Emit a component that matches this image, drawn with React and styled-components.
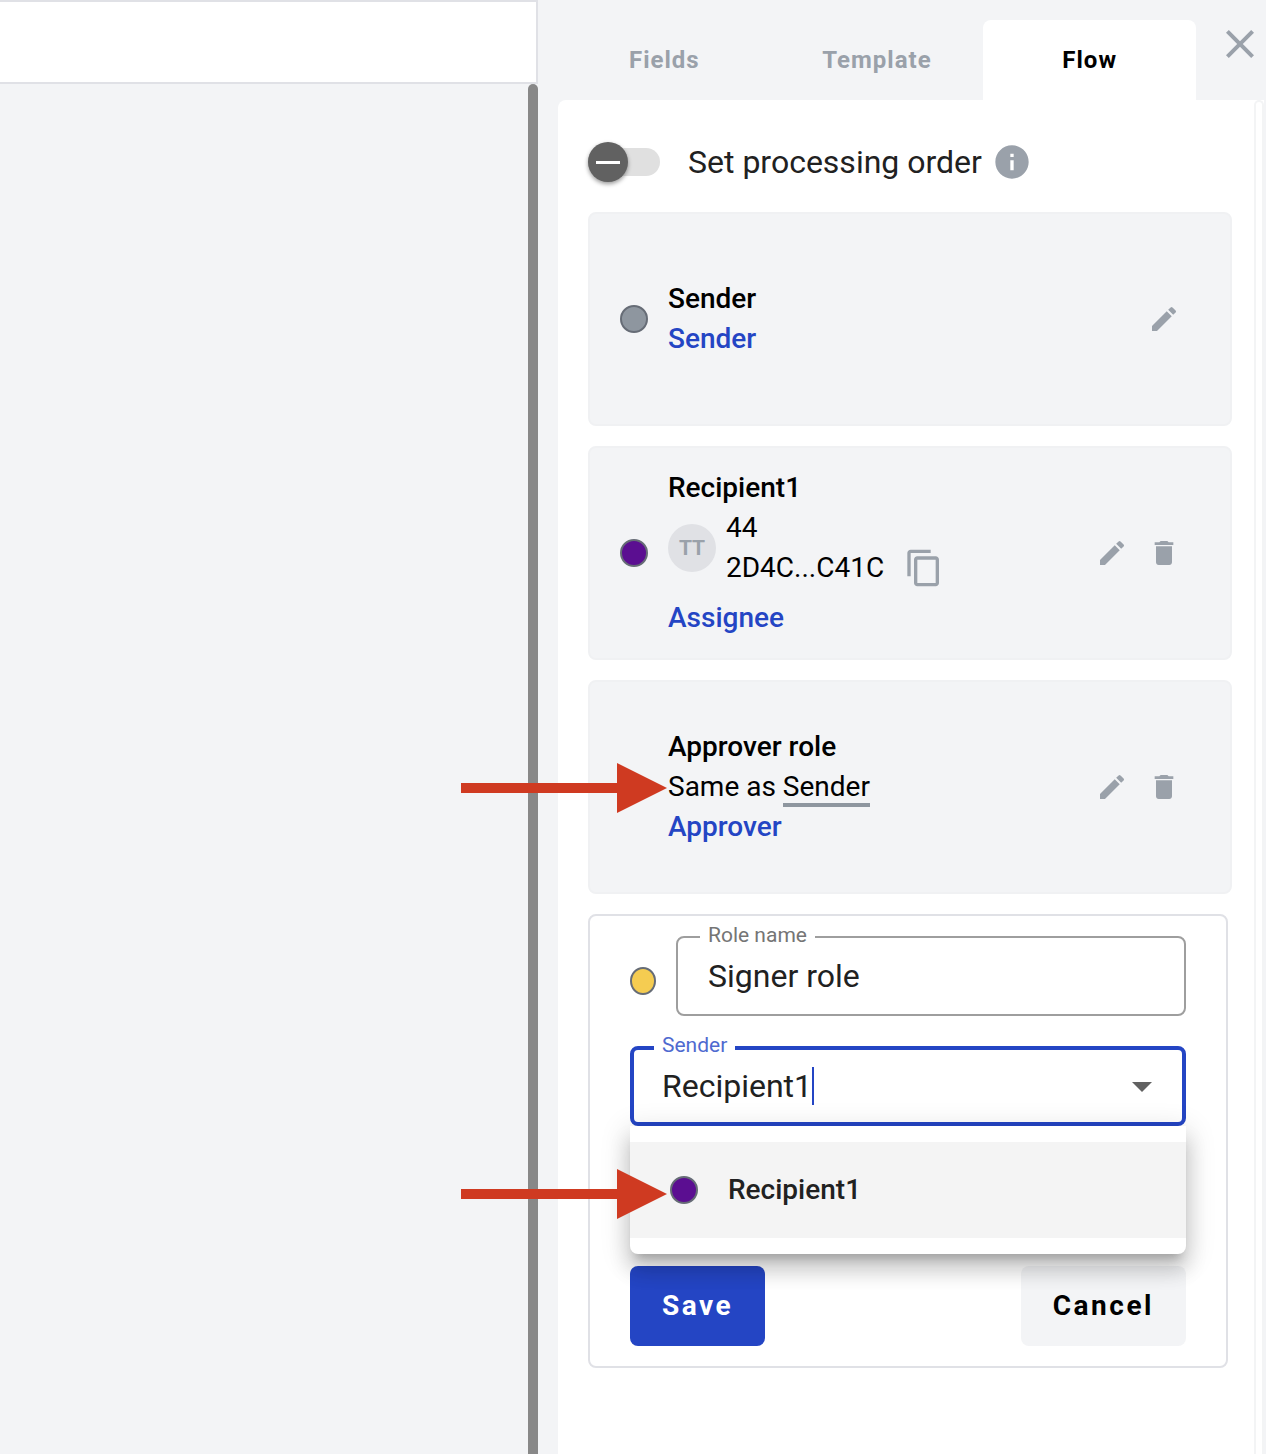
import React, { useState } from "react";
import styled, { createGlobalStyle, css } from "styled-components";
import {
  MdArrowDropDown,
  MdClose,
  MdContentCopy,
  MdDelete,
  MdEdit,
  MdInfo,
} from "react-icons/md";

const color = {
  page: "#f3f4f6",
  line: "#e0e1e6",
  muted: "#9aa1aa",
  blue: "#2445c4",
  ink: "#212121",
  purple: "#5b0e91",
  yellow: "#f5cc51",
  slate: "#8e969f",
  red: "#cf3a21",
};

const GlobalStyle = createGlobalStyle`
  *, *::before, *::after { box-sizing: border-box; }
  body {
    margin: 0;
    background: ${color.page};
    color: #000;
    font-family: Roboto, "Liberation Sans", sans-serif;
    font-size: 28px;
    line-height: 40px;
    -webkit-font-smoothing: antialiased;
  }
  button, input { font: inherit; color: inherit; }
`;

const Page = styled.div`
  display: flex;
  min-height: 100vh;
`;

const Workspace = styled.main`
  flex: 1;
  min-width: 0;
  display: flex;
  flex-direction: column;
`;

const Toolbar = styled.div`
  height: 84px;
  background: #fff;
  border: 2px solid ${color.line};
  border-left: 0;
`;

const Canvas = styled.div`
  flex: 1;
  display: flex;
  justify-content: flex-end;
`;

const CanvasScrollbar = styled.div`
  width: 10px;
  background: #888;
  border-radius: 5px 5px 0 0;
`;

const Sidebar = styled.aside`
  flex: 0 0 728px;
  display: flex;
  flex-direction: column;
`;

const SidebarHeader = styled.header`
  display: flex;
  gap: 20px;
  padding: 20px 2px 0 20px;
`;

const TabList = styled.div`
  flex: 1;
  display: grid;
  grid-template-columns: repeat(3, 1fr);
`;

const Tab = styled.button`
  height: 80px;
  padding: 0;
  border: 0;
  border-radius: 8px 8px 0 0;
  background: ${(p) => (p.$active ? "#fff" : "transparent")};
  color: ${(p) => (p.$active ? "#000" : color.muted)};
  font-size: 24px;
  font-weight: 700;
  letter-spacing: 1px;
  cursor: pointer;
`;

const IconButton = styled.button`
  display: inline-flex;
  flex: none;
  align-self: ${(p) => p.$align || "center"};
  padding: 0;
  border: 0;
  background: none;
  color: ${color.muted};
  cursor: pointer;
`;

const Panel = styled.section`
  flex: 1;
  display: flex;
  margin: 0 2px 0 20px;
  background: #fff;
  border-radius: 8px 0 0 0;
`;

const PanelScrollbar = styled.div`
  width: 10px;
  border: 2px solid #f3f4f5;
  border-bottom: 0;
  border-radius: 5px 5px 0 0;
`;

const PanelContent = styled.div`
  flex: 1;
  display: flex;
  flex-direction: column;
  gap: 20px;
  padding: 32px 22px 32px 30px;
`;

const OrderRow = styled.div`
  display: flex;
  align-items: center;
  height: 60px;
`;

const OrderLabel = styled.label`
  display: flex;
  align-items: center;
  gap: 28px;
  margin-right: 10px;
  color: ${color.ink};
  font-size: 32px;
  cursor: pointer;
`;

const Switch = styled.input`
  appearance: none;
  display: flex;
  align-items: center;
  width: 72px;
  height: 28px;
  margin: 0;
  border-radius: 14px;
  background: #e0e0e0;
  cursor: pointer;

  &::before {
    content: "";
    flex: none;
    width: 40px;
    height: 40px;
    border-radius: 50%;
    background: linear-gradient(#fff, #fff) center / 24px 3px no-repeat #616161;
    box-shadow: 0 2px 4px rgba(0, 0, 0, 0.4);
  }

  &:checked {
    justify-content: flex-end;
  }
`;

const Dot = styled.span`
  flex: none;
  width: ${(p) => (p.$narrow ? 26 : 28)}px;
  height: 28px;
  border-radius: 50%;
  ${(p) =>
    p.$fill &&
    css`
      border: 2px solid #666c76;
      background: ${p.$fill};
    `}
`;

const Card = styled.article`
  position: relative;
  display: flex;
  align-items: center;
  gap: 20px;
  min-height: 214px;
  padding: 0 50px 0 30px;
  border: 2px solid #f0f1f3;
  border-radius: 8px;
  background: ${color.page};
`;

const CardBody = styled.div`
  flex: 1;
  min-width: 0;
`;

const RoleName = styled.div`
  font-weight: 500;
`;

const RoleType = styled(RoleName)`
  color: ${color.blue};
`;

const RoleRef = styled.span`
  border-bottom: 4px solid ${color.slate};
`;

const Person = styled.div`
  display: flex;
  align-items: center;
  gap: 10px;
  margin-bottom: 10px;
`;

const Avatar = styled.span`
  display: grid;
  place-items: center;
  width: 48px;
  height: 48px;
  border-radius: 50%;
  background: #e0e1e5;
  color: ${color.muted};
  font-size: 21px;
  font-weight: 700;
`;

const PersonId = styled.div`
  display: flex;
  align-items: center;
  gap: 20px;
`;

const FormCard = styled.form`
  display: flex;
  flex-direction: column;
  margin-right: 4px;
  padding: 20px 40px;
  border: 2px solid ${color.line};
  border-radius: 8px;
`;

const RoleNameRow = styled.div`
  display: flex;
  align-items: center;
  gap: 20px;
  height: 90px;
  margin-bottom: 20px;
`;

const Field = styled.div`
  position: relative;
  flex: 1;
  align-self: flex-start;
  display: flex;
  align-items: center;
  width: 100%;
  height: 80px;
  padding: 0 ${(p) => (p.$focused ? 16 : 30)}px 0 ${(p) => (p.$focused ? 28 : 30)}px;
  border: ${(p) => (p.$focused ? `4px solid ${color.blue}` : "2px solid #9e9e9e")};
  border-radius: 8px;
  color: ${color.ink};
  font-size: 32px;
`;

const FieldLabel = styled.label`
  position: absolute;
  top: ${(p) => (p.$focused ? -19 : -17)}px;
  left: ${(p) => (p.$focused ? 20 : 22)}px;
  padding: 0 8px;
  background: #fff;
  color: ${(p) => (p.$focused ? "#4f6ad0" : "#757575")};
  font-size: 21px;
  line-height: 28px;
`;

const TextInput = styled.input`
  flex: 1;
  min-width: 0;
  padding: 0;
  border: 0;
  outline: 0;
  background: none;
`;

const ComboInput = styled.input`
  field-sizing: content;
  padding: 0;
  border: 0;
  outline: 0;
  background: none;
  caret-color: transparent;
`;

const Caret = styled.span`
  width: 2px;
  height: 38px;
  margin-right: auto;
  background: ${color.blue};
`;

const DropIcon = styled(MdArrowDropDown)`
  color: #616161;
`;

const Combo = styled.div`
  position: relative;
`;

const Menu = styled.div`
  position: absolute;
  z-index: 2;
  top: 100%;
  left: 0;
  right: 0;
  padding: 16px 0;
  border-radius: 0 0 8px 8px;
  background: #fff;
  box-shadow:
    0 10px 10px -6px rgba(0, 0, 0, 0.2),
    0 16px 20px 2px rgba(0, 0, 0, 0.14),
    0 6px 28px 4px rgba(0, 0, 0, 0.12);
`;

const Option = styled.div`
  display: flex;
  align-items: center;
  gap: 30px;
  height: 96px;
  padding: 0 40px;
  background: #f4f4f4;
  color: ${color.ink};
  font-weight: 500;
  cursor: pointer;
`;

const Actions = styled.div`
  display: flex;
  justify-content: space-between;
  margin-top: 140px;
`;

const ActionButton = styled.button`
  height: 80px;
  padding: 0 32px;
  border: 0;
  border-radius: 8px;
  background: ${(p) => (p.$primary ? color.blue : color.page)};
  color: ${(p) => (p.$primary ? "#fff" : "#000")};
  font-weight: 700;
  letter-spacing: 0.09em;
  cursor: pointer;
`;

const Pointer = styled.svg`
  position: absolute;
  z-index: 3;
  top: ${(p) => p.$top}px;
  left: ${(p) => p.$left}px;
  width: 206px;
  height: 50px;
  pointer-events: none;
`;

function PointerArrow({ top, left }) {
  return (
    <Pointer $top={top} $left={left} viewBox="0 0 206 50" aria-hidden="true">
      <path d="M0 20H156V0L206 25L156 50V30H0Z" fill={color.red} />
    </Pointer>
  );
}

function RoleCard({ name, type, fill, removable, pointer, children }) {
  return (
    <Card>
      <Dot $fill={fill} />
      <CardBody>
        <RoleName>{name}</RoleName>
        {children}
        <RoleType>{type}</RoleType>
      </CardBody>
      <IconButton type="button" aria-label={`Edit ${name}`}>
        <MdEdit size={32} />
      </IconButton>
      {removable && (
        <IconButton type="button" aria-label={`Delete ${name}`}>
          <MdDelete size={32} />
        </IconButton>
      )}
      {pointer && <PointerArrow top={81} left={-129} />}
    </Card>
  );
}

const tabs = ["Fields", "Template", "Flow"];

export default function App() {
  const [active, setActive] = useState("Flow");
  const [ordered, setOrdered] = useState(false);
  const [roleName, setRoleName] = useState("Signer role");
  const [sender, setSender] = useState("Recipient1");

  return (
    <>
      <GlobalStyle />
      <Page>
        <Workspace>
          <Toolbar />
          <Canvas>
            <CanvasScrollbar />
          </Canvas>
        </Workspace>
        <Sidebar>
          <SidebarHeader>
            <TabList role="tablist">
              {tabs.map((tab) => (
                <Tab
                  key={tab}
                  type="button"
                  role="tab"
                  aria-selected={tab === active}
                  $active={tab === active}
                  onClick={() => setActive(tab)}
                >
                  {tab}
                </Tab>
              ))}
            </TabList>
            <IconButton type="button" aria-label="Close" $align="flex-start">
              <MdClose size={48} />
            </IconButton>
          </SidebarHeader>
          <Panel>
            <PanelContent>
              <OrderRow>
                <OrderLabel>
                  <Switch
                    type="checkbox"
                    checked={ordered}
                    onChange={(e) => setOrdered(e.target.checked)}
                  />
                  Set processing order
                </OrderLabel>
                <IconButton type="button" aria-label="About processing order">
                  <MdInfo size={40} />
                </IconButton>
              </OrderRow>

              <RoleCard name="Sender" type="Sender" fill={color.slate} />

              <RoleCard name="Recipient1" type="Assignee" fill={color.purple} removable>
                <Person>
                  <Avatar>TT</Avatar>
                  <div>
                    <div>44</div>
                    <PersonId>
                      2D4C...C41C
                      <IconButton type="button" aria-label="Copy ID">
                        <MdContentCopy size={40} />
                      </IconButton>
                    </PersonId>
                  </div>
                </Person>
              </RoleCard>

              <RoleCard name="Approver role" type="Approver" removable pointer>
                <div>
                  Same as <RoleRef>Sender</RoleRef>
                </div>
              </RoleCard>

              <FormCard onSubmit={(e) => e.preventDefault()}>
                <RoleNameRow>
                  <Dot $fill={color.yellow} $narrow />
                  <Field>
                    <FieldLabel htmlFor="role-name">Role name</FieldLabel>
                    <TextInput
                      id="role-name"
                      value={roleName}
                      onChange={(e) => setRoleName(e.target.value)}
                    />
                  </Field>
                </RoleNameRow>
                <Combo>
                  <Field $focused>
                    <FieldLabel htmlFor="role-sender" $focused>
                      Sender
                    </FieldLabel>
                    <ComboInput
                      id="role-sender"
                      role="combobox"
                      aria-expanded="true"
                      aria-controls="role-options"
                      value={sender}
                      onChange={(e) => setSender(e.target.value)}
                    />
                    <Caret />
                    <DropIcon size={48} />
                  </Field>
                  <Menu>
                    <div role="listbox" id="role-options">
                      <Option role="option" aria-selected="true">
                        <Dot $fill={color.purple} />
                        Recipient1
                      </Option>
                    </div>
                    <PointerArrow top={43} left={-169} />
                  </Menu>
                </Combo>
                <Actions>
                  <ActionButton type="submit" $primary>
                    Save
                  </ActionButton>
                  <ActionButton type="button">Cancel</ActionButton>
                </Actions>
              </FormCard>
            </PanelContent>
            <PanelScrollbar />
          </Panel>
        </Sidebar>
      </Page>
    </>
  );
}
